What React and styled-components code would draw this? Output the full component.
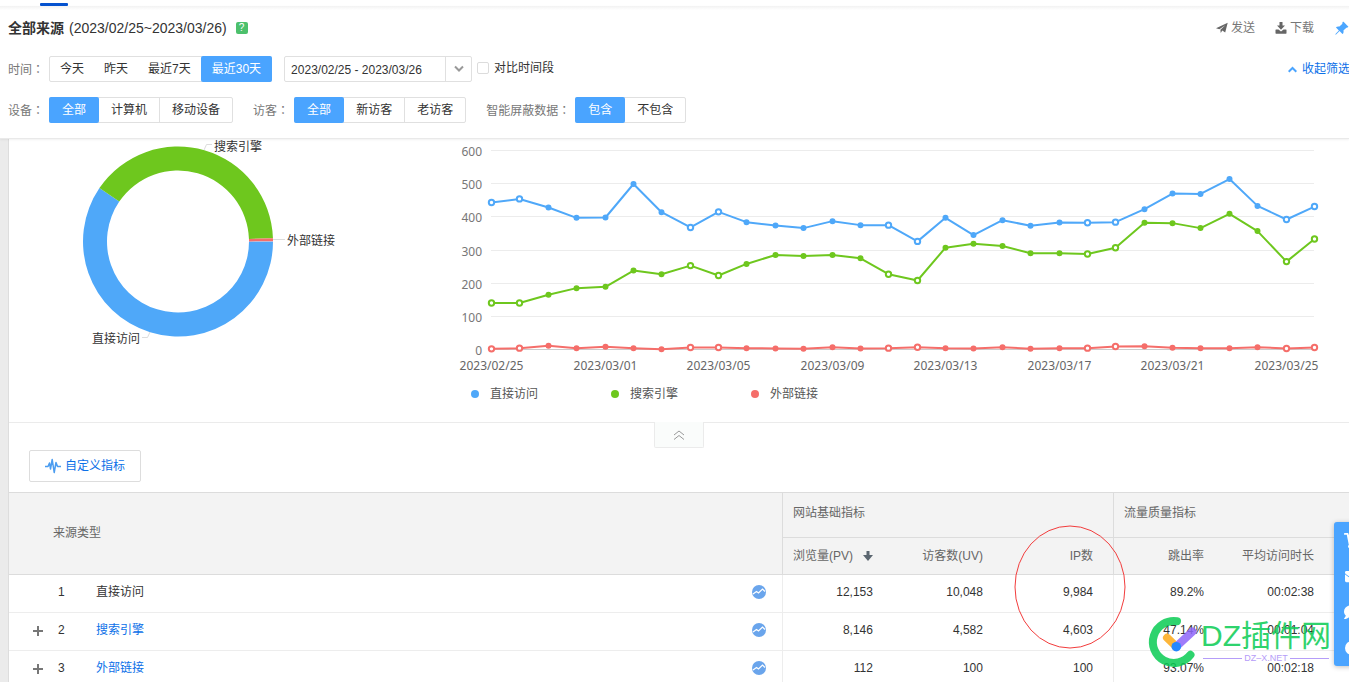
import React, { useLayoutEffect, useRef, useState } from "react";
import styled, { createGlobalStyle } from "styled-components";
import { BsPinAngleFill } from "react-icons/bs";
import { FaShoppingCart, FaEnvelope, FaComment } from "react-icons/fa";

const GlobalStyle = createGlobalStyle`
  * {
    box-sizing: border-box;
  }

  body {
    margin: 0;
    background: #fff;
    color: #333;
    font-family: "Liberation Sans", "Noto Sans CJK SC", sans-serif;
    font-size: 12px;
    line-height: 18px;
  }

  button,
  input {
    font: inherit;
    color: inherit;
  }

  svg {
    display: block;
    flex: none;
    overflow: visible;
  }
`;

const Page = styled.div`
  position: relative;
  height: 100vh;
  overflow: hidden;
`;

const TopStrip = styled.div`
  display: flex;
  align-items: flex-end;
  height: 6px;
  padding-left: 40px;
`;

const TabMark = styled.div`
  width: 28px;
  height: 3px;
  border-radius: 1px;
  background: #0552cf;
`;

const Header = styled.header`
  position: relative;
  z-index: 2;
  padding: 8px 0 15px 8px;
  border-bottom: 1px solid #e9e9e9;
  background: linear-gradient(#f2f2f2, #fff 4px);
  box-shadow: 0 1px 2px rgba(0, 0, 0, 0.06);
`;

const TitleRow = styled.div`
  display: flex;
  align-items: center;
  height: 28px;
  margin-bottom: 14px;
`;

const Title = styled.h1`
  margin: 0 5px 0 0;
  font-size: 14px;
  line-height: 20px;
  font-weight: 700;
`;

const Range = styled.span`
  font-size: 14px;
  line-height: 20px;
`;

const Help = styled.button`
  width: 12px;
  height: 12px;
  margin-left: 9px;
  padding: 0;
  border: 0;
  border-radius: 2px;
  background: #4cc06c;
  color: #fff;
  font-size: 10px;
  line-height: 12px;
`;

const Actions = styled.div`
  display: flex;
  align-items: center;
  margin-left: auto;
`;

const Action = styled.button`
  display: flex;
  align-items: center;
  gap: 3px;
  margin-right: 20px;
  padding: 0;
  border: 0;
  background: none;
  color: #777;
`;

const Pin = styled.button`
  padding: 0;
  border: 0;
  background: none;
  color: #4ba6ff;
`;

const FilterRow = styled.div`
  display: flex;
  align-items: center;
  height: 26px;

  & + & {
    margin-top: 15px;
  }
`;

const Field = styled.div`
  display: flex;
  align-items: center;
  margin-right: ${(props) => props.$space || "20px"};
`;

const FieldLabel = styled.span`
  margin-right: 5px;
  color: #777;
`;

const Colon = styled.span`
  font-family: "Noto Sans CJK TC", sans-serif;
`;

const Group = styled.div`
  display: flex;
  height: 26px;
  border: 1px solid #e0e0e0;
  border-radius: 2px;
`;

const Option = styled.button`
  margin: -1px 0;
  padding: 0 ${(props) => (props.$plain ? "10px" : "12px")};
  border: 0 solid #e0e0e0;
  border-right-width: ${(props) => (props.$plain ? "0" : "1px")};
  background: none;
  color: #333;

  &:last-child {
    border-right: 0;
  }

  &[aria-pressed="true"] {
    margin: ${(props) => (props.$plain ? "-1px -1px -1px 0" : "-1px")};
    padding: 0 ${(props) => (props.$plain ? "11px" : "13px")};
    border: 0;
    border-radius: 2px;
    background: #4aa4ff;
    color: #fff;
  }

  &[aria-pressed="true"] + & {
    margin-left: 1px;
  }
`;

const DateBox = styled.div`
  display: flex;
  width: 188px;
  height: 26px;
  border: 1px solid #e0e0e0;
  border-radius: 2px;
`;

const DateInput = styled.input`
  flex: 1;
  min-width: 0;
  padding: 1px 6px 0;
  border: 0;
  outline: 0;
  background: none;
`;

const DateToggle = styled.button`
  display: flex;
  align-items: center;
  justify-content: center;
  width: 26px;
  padding: 0;
  border: 0;
  border-left: 1px solid #e0e0e0;
  background: none;
`;

const Compare = styled.label`
  display: flex;
  align-items: center;
  gap: 5px;
  padding-bottom: 2px;
`;

const Check = styled.input`
  appearance: none;
  width: 12px;
  height: 12px;
  margin: 0;
  border: 1px solid #dcdcdc;
  border-radius: 2px;
  background: #fff;
`;

const Fold = styled.a`
  display: flex;
  align-items: center;
  gap: 5px;
  margin: 0 -1px 0 auto;
  color: #0c70e8;
  text-decoration: none;
  white-space: nowrap;
`;

const Body = styled.main`
  padding-left: 8px;
  background: #ebebeb;
`;

const Content = styled.div`
  border-left: 1px solid #ddd;
  background: #fff;
`;

const Charts = styled.section`
  display: grid;
  grid-template-columns: 440px minmax(0, 1fr);
  border-bottom: 1px solid #ebebeb;
  font-family: "Noto Sans", "Noto Sans CJK SC", sans-serif;
`;

const ChartBox = styled.div`
  min-width: 0;
  padding-bottom: 19px;
`;

const Legend = styled.ul`
  display: flex;
  margin: 0;
  padding: 6px 0 0 22px;
  list-style: none;
`;

const LegendItem = styled.li`
  display: flex;
  align-items: center;
  gap: 11px;
  width: 140px;
  color: #555;

  &::before {
    content: "";
    width: 8px;
    height: 8px;
    border-radius: 50%;
    background: ${(props) => props.$color};
  }
`;

const FoldTab = styled.button`
  display: flex;
  align-items: center;
  justify-content: center;
  width: 50px;
  height: 26px;
  margin: -1px auto 2px;
  padding: 0;
  border: 1px solid #ebebeb;
  border-top: 0;
  border-radius: 0 0 2px 2px;
  background: #fafcfb;
`;

const Custom = styled.button`
  display: flex;
  align-items: center;
  gap: 4px;
  height: 32px;
  margin: 0 0 10px 20px;
  padding: 0 15px;
  border: 1px solid #ddd;
  border-radius: 2px;
  background: #fff;
  color: #0c70e8;
`;

const Table = styled.table`
  width: 100%;
  border-top: 1px solid #dcdcdc;
  border-spacing: 0;
  table-layout: fixed;
`;

const Col = styled.col`
  width: ${(props) => props.$width};
`;

const Th = styled.th`
  height: ${(props) => (props.$group ? "45px" : "37px")};
  padding: 0 ${(props) => (props.$last ? "35px" : "20px")} 1px 10px;
  border-bottom: 1px solid #dcdcdc;
  border-left: ${(props) => (props.$line ? "1px solid #dcdcdc" : "0")};
  background: #f3f3f3;
  color: #666;
  font-weight: 400;
  text-align: ${(props) => (props.$group ? "left" : "right")};
  white-space: nowrap;
`;

const GroupTh = styled(Th)`
  padding-bottom: 5px;
`;

const SourceTh = styled(Th)`
  padding-left: 44px;
  text-align: left;
`;

const Sort = styled.button`
  display: flex;
  align-items: center;
  justify-content: space-between;
  width: 100%;
  padding: 0;
  border: 0;
  background: none;
  color: #666;
`;

const Td = styled.td`
  height: 38px;
  padding: 0 ${(props) => (props.$last ? "35px" : "20px")} 3px 0;
  border-bottom: 1px solid #ededed;
  border-left: ${(props) => (props.$line ? "1px solid #ededed" : "0")};
  text-align: right;
`;

const Source = styled.div`
  display: grid;
  grid-template-columns: 25px 38px 1fr auto;
  align-items: center;
  padding-left: 24px;
  text-align: left;
`;

const Expand = styled.button`
  grid-column: 1;
  width: 10px;
  padding: 2px 0 0;
  border: 0;
  background: none;
`;

const Index = styled.span`
  grid-column: 2;
`;

const Name = styled.span`
  grid-column: 3;
`;

const NameLink = styled.a`
  grid-column: 3;
  color: #0c70e8;
  text-decoration: none;
`;

const Trend = styled.button`
  margin-right: -4px;
  padding: 0;
  border: 0;
  background: none;
`;

const SideBar = styled.nav`
  position: absolute;
  z-index: 3;
  top: 522px;
  right: -21px;
  display: flex;
  flex-direction: column;
  width: 36px;
  height: 144px;
  border-radius: 3px;
  background: #4aa4ff;
  box-shadow: 0 1px 5px rgba(0, 0, 0, 0.25);
`;

const SideButton = styled.button`
  display: flex;
  flex: 1;
  align-items: center;
  justify-content: center;
  padding: 0;
  border: 0;
  background: none;
  color: #fff;
`;

const Circle = styled.svg`
  position: absolute;
  top: 525px;
  right: 223px;
  pointer-events: none;
`;

const Watermark = styled.div`
  position: absolute;
  top: 615px;
  right: 18px;
  display: flex;
  opacity: 0.85;
  pointer-events: none;
`;

const Brand = styled.div`
  color: #0acc54;
  font-size: 30px;
  line-height: 42px;
  white-space: nowrap;
`;

const Site = styled.div`
  display: flex;
  align-items: center;
  gap: 2px;
  margin: -4px 2px 0;
  color: #a98cf8;
  font-size: 9px;
  line-height: 10px;

  &::before,
  &::after {
    content: "";
    flex: 1;
    height: 1px;
    background: #a98cf8;
  }
`;

const series = [
  {
    name: "直接访问",
    color: "#4fa8f9",
    data: [
      443, 454, 428, 397, 398, 499, 414, 368, 415, 384, 374, 366, 387, 375, 375,
      326, 397, 345, 390, 373, 383, 382, 384, 423, 470, 469, 514, 433, 392, 431,
    ],
  },
  {
    name: "搜索引擎",
    color: "#6ec71e",
    data: [
      140, 140, 165, 185, 189, 238, 227, 253, 223, 258, 285, 282, 285, 275, 227,
      208, 307, 319, 312, 290, 290, 288, 307, 382, 381, 366, 409, 357, 265, 333,
    ],
  },
  {
    name: "外部链接",
    color: "#f56e6a",
    data: [
      2, 4, 11, 4, 8, 4, 1, 6, 6, 4, 3, 2, 7, 3, 4, 7, 4, 3, 7, 2, 4, 4, 9, 10,
      5, 4, 4, 7, 3, 6,
    ],
  },
];

const dates = [
  "2023/02/25",
  "2023/03/01",
  "2023/03/05",
  "2023/03/09",
  "2023/03/13",
  "2023/03/17",
  "2023/03/21",
  "2023/03/25",
];

const rows = [
  { name: "直接访问", values: ["12,153", "10,048", "9,984", "89.2%", "00:02:38"] },
  { name: "搜索引擎", link: true, values: ["8,146", "4,582", "4,603", "47.14%", "00:01:04"] },
  { name: "外部链接", link: true, values: ["112", "100", "100", "93.07%", "00:02:18"] },
];

const Options = ({ items, active, plain }) => {
  const [value, setValue] = useState(active);

  return (
    <Group>
      {items.map((item) => (
        <Option
          key={item}
          type="button"
          $plain={plain}
          aria-pressed={item === value}
          onClick={() => setValue(item)}
        >
          {item}
        </Option>
      ))}
    </Group>
  );
};

const Label = ({ children }) => (
  <FieldLabel>
    {children}
    <Colon lang="zh-TW">：</Colon>
  </FieldLabel>
);

// angles in degrees, clockwise from 3 o'clock
const ringPath = (from, to) => {
  const point = (r, deg) => {
    const a = (deg * Math.PI) / 180;
    return `${169 + r * Math.cos(a)} ${102.5 + r * Math.sin(a)}`;
  };
  const large = to - from > 180 ? 1 : 0;
  return `M${point(95, from)} A95 95 0 ${large} 1 ${point(95, to)} L${point(71, to)} A71 71 0 ${large} 0 ${point(71, from)} Z`;
};

const Donut = () => (
  <svg width="440" height="240" role="img" aria-label="来源占比">
    <path d={ringPath(0, 214.2)} fill="#4fa8f9" />
    <path d={ringPath(214.2, 358)} fill="#6ec71e" />
    <path d={ringPath(358, 359.9)} fill="#f56e6a" />
    <g fill="none" stroke="#ddd">
      <path d="M195 11 L197.500 5.500 H203" />
      <path d="M264 100.500 H276" />
      <path d="M141 193 L138.500 198.500 H133" />
    </g>
    <g fontSize="12" fill="#333">
      <text x="205" y="12">搜索引擎</text>
      <text x="278" y="106">外部链接</text>
      <text x="83" y="204">直接访问</text>
    </g>
  </svg>
);

const LineChart = () => {
  const box = useRef(null);
  const [width, setWidth] = useState(900);

  useLayoutEffect(() => {
    const update = () => setWidth(box.current.clientWidth);
    update();
    window.addEventListener("resize", update);
    return () => window.removeEventListener("resize", update);
  }, []);

  const left = 42;
  const right = width - 35;
  const x = (i) => Math.round(left + (i * (right - left)) / 29) + 0.5;
  const y = (v) => 210.5 - (v * 199) / 600;

  return (
    <ChartBox ref={box}>
      <svg width={width} height="240" role="img" aria-label="来源趋势">
        {[0, 100, 200, 300, 400, 500, 600].map((v) => (
          <g key={v}>
            <line
              x1={left}
              x2={right}
              y1={Math.floor(y(v)) + 0.5}
              y2={Math.floor(y(v)) + 0.5}
              stroke={v ? "#ececec" : "#ccc"}
            />
            <text x={left - 9} y={Math.floor(y(v)) + 6} fontSize="12" fill="#777" textAnchor="end">
              {v}
            </text>
          </g>
        ))}
        {dates.map((date, i) => (
          <text key={date} x={x(i * 4)} y="231" fontSize="12" fill="#666" textAnchor="middle">
            {date}
          </text>
        ))}
        {series.map(({ name, color, data }) => (
          <g key={name} stroke={color} strokeWidth="2">
            <polyline
              fill="none"
              strokeLinejoin="round"
              points={data.map((v, i) => `${x(i)},${y(v)}`).join(" ")}
            />
            {/* weekends are drawn hollow */}
            {data.map((v, i) => (
              <circle
                key={i}
                cx={x(i)}
                cy={y(v)}
                r={i % 7 < 2 ? 2.7 : 2}
                fill={i % 7 < 2 ? "#fff" : color}
              />
            ))}
          </g>
        ))}
      </svg>
      <Legend>
        {series.map(({ name, color }) => (
          <LegendItem key={name} $color={color}>
            {name}
          </LegendItem>
        ))}
      </Legend>
    </ChartBox>
  );
};

const App = () => {
  return (
    <Page>
      <GlobalStyle />
      <TopStrip>
        <TabMark />
      </TopStrip>

      <Header>
        <TitleRow>
          <Title>全部来源</Title>
          <Range>(2023/02/25~2023/03/26)</Range>
          <Help type="button" aria-label="帮助">?</Help>
          <Actions>
            <Action type="button">
              <svg width="12" height="12" viewBox="0 0 12 12" fill="#666">
                <path d="M0 6.200 L11.700 0.800 L9.200 10.500 L6.300 8.600 L4.700 11 L4.400 7.800 L9.300 3.200 L3.400 7.200 Z" />
              </svg>
              发送
            </Action>
            <Action type="button">
              <svg width="12" height="12" viewBox="0 0 12 12" fill="#666">
                <path d="M4.500 0 H7.500 V3.500 H10 L6 7.700 L2 3.500 H4.500 Z" />
                <path d="M1 7.500 H3.500 L6 9.500 L8.500 7.500 H11 Q11.500 7.500 11.500 8 V11 Q11.500 11.700 11 11.700 H1 Q0.500 11.700 0.500 11 V8 Q0.500 7.500 1 7.500 Z" />
              </svg>
              下载
            </Action>
            <Pin type="button" aria-label="固定">
              <BsPinAngleFill size={15} />
            </Pin>
          </Actions>
        </TitleRow>

        <FilterRow>
          <Field $space="12px">
            <Label>时间</Label>
            <Options plain items={["今天", "昨天", "最近7天", "最近30天"]} active="最近30天" />
          </Field>
          <Field $space="5px">
            <DateBox>
              <DateInput aria-label="日期范围" readOnly value="2023/02/25 - 2023/03/26" />
              <DateToggle type="button" aria-label="选择日期">
                <svg width="10" height="8" fill="none" stroke="#999" strokeWidth="2">
                  <path d="M1 1.500 L5 5.500 L9 1.500" />
                </svg>
              </DateToggle>
            </DateBox>
          </Field>
          <Compare>
            <Check type="checkbox" />
            对比时间段
          </Compare>
          <Fold href="#filters">
            <svg width="9" height="7" fill="none" stroke="#4aa4ff" strokeWidth="2">
              <path d="M0.700 5.700 L4.500 2 L8.300 5.700" />
            </svg>
            收起筛选
          </Fold>
        </FilterRow>

        <FilterRow>
          <Field>
            <Label>设备</Label>
            <Options items={["全部", "计算机", "移动设备"]} active="全部" />
          </Field>
          <Field>
            <Label>访客</Label>
            <Options items={["全部", "新访客", "老访客"]} active="全部" />
          </Field>
          <Field>
            <Label>智能屏蔽数据</Label>
            <Options items={["包含", "不包含"]} active="包含" />
          </Field>
        </FilterRow>
      </Header>

      <Body>
        <Content>
          <Charts>
            <Donut />
            <LineChart />
          </Charts>
          <FoldTab type="button" aria-label="收起图表">
            <svg width="12" height="10" fill="none" stroke="#999">
              <path d="M1 5 L6 1 L11 5 M1 9.500 L6 5.500 L11 9.500" />
            </svg>
          </FoldTab>
          <Custom type="button">
            <svg width="16" height="16" fill="none" stroke="#4a9cf0" strokeWidth="1.5" strokeLinejoin="round">
              <path d="M0 8.500 H3 L4.500 5 L5.500 11 L7.200 1.500 L9.200 14.500 L11 4.500 L12.500 8.500 H16" />
            </svg>
            自定义指标
          </Custom>

          <Table>
            <colgroup>
              <Col />
              <Col $width="111px" />
              <Col $width="110px" />
              <Col $width="110px" />
              <Col $width="111px" />
              <Col $width="125px" />
            </colgroup>
            <thead>
              <tr>
                <SourceTh rowSpan={2} scope="col">来源类型</SourceTh>
                <GroupTh $group $line colSpan={3} scope="colgroup">网站基础指标</GroupTh>
                <GroupTh $group $line colSpan={2} scope="colgroup">流量质量指标</GroupTh>
              </tr>
              <tr>
                <Th $line scope="col">
                  <Sort type="button">
                    浏览量(PV)
                    <svg width="10" height="10" fill="#5b6670">
                      <path d="M3.500 0 H6.500 V4 H10 L5 10 L0 4 H3.500 Z" />
                    </svg>
                  </Sort>
                </Th>
                <Th scope="col">访客数(UV)</Th>
                <Th scope="col">IP数</Th>
                <Th $line scope="col">跳出率</Th>
                <Th $last scope="col">平均访问时长</Th>
              </tr>
            </thead>
            <tbody>
              {rows.map(({ name, link, values }, i) => (
                <tr key={name}>
                  <Td>
                    <Source>
                      {link && (
                        <Expand type="button" aria-label={`展开${name}`}>
                          <svg width="10" height="10" stroke="#777" strokeWidth="2">
                            <path d="M5 0 V10 M0 5 H10" />
                          </svg>
                        </Expand>
                      )}
                      <Index>{i + 1}</Index>
                      {link ? <NameLink href="#source">{name}</NameLink> : <Name>{name}</Name>}
                      <Trend type="button" aria-label={`${name}趋势`}>
                        <svg width="14" height="14">
                          <circle cx="7" cy="7" r="7" fill="#6aa5ec" />
                          <path d="M1 9 L4.500 6.500 L6.500 8 L10.500 4 L13 6.500" fill="none" stroke="#fff" strokeWidth="1.2" />
                        </svg>
                      </Trend>
                    </Source>
                  </Td>
                  {values.map((value, n) => (
                    <Td key={n} $line={n === 0 || n === 3} $last={n === 4}>
                      {value}
                    </Td>
                  ))}
                </tr>
              ))}
            </tbody>
          </Table>
        </Content>
      </Body>

      <Circle width="112" height="124" fill="none" stroke="#f23c3c">
        <ellipse cx="56" cy="62" rx="55" ry="61" />
      </Circle>

      <Watermark>
        <svg width="52" height="54" fill="none" strokeLinecap="round">
          <path d="M28 6.200 A21 21 0 1 0 41.500 39.800" stroke="#0acc54" strokeWidth="8" />
          <path d="M18 22.700 L27.300 31.700" stroke="#fdaa18" strokeWidth="8" />
          <path d="M27.300 31.700 L43.500 16.500" stroke="#8f66fa" strokeWidth="8" />
          <circle cx="27.300" cy="31.700" r="4.800" fill="#0074ff" />
        </svg>
        <div>
          <Brand>DZ插件网</Brand>
          <Site>DZ–X.NET</Site>
        </div>
      </Watermark>

      <SideBar>
        <SideButton type="button" aria-label="购买">
          <FaShoppingCart size={17} />
        </SideButton>
        <SideButton type="button" aria-label="邮件">
          <FaEnvelope size={15} />
        </SideButton>
        <SideButton type="button" aria-label="咨询">
          <FaComment size={16} />
        </SideButton>
        <SideButton type="button" aria-label="帮助中心">
          <svg width="14" height="14" fill="currentColor">
            <circle cx="7" cy="7" r="7" />
          </svg>
        </SideButton>
      </SideBar>
    </Page>
  );
};

export default App;
